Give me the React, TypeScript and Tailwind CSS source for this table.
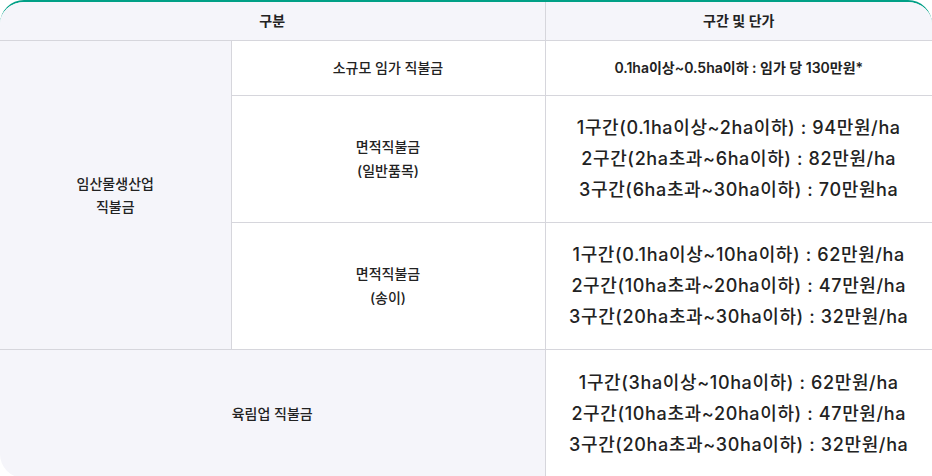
const BIG_ROWS = [
  [
    "1구간(0.1ha이상~2ha이하) : 94만원/ha",
    "2구간(2ha초과~6ha이하) : 82만원/ha",
    "3구간(6ha초과~30ha이하) : 70만원ha",
  ],
  [
    "1구간(0.1ha이상~10ha이하) : 62만원/ha",
    "2구간(10ha초과~20ha이하) : 47만원/ha",
    "3구간(20ha초과~30ha이하) : 32만원/ha",
  ],
  [
    "1구간(3ha이상~10ha이하) : 62만원/ha",
    "2구간(10ha초과~20ha이하) : 47만원/ha",
    "3구간(20ha초과~30ha이하) : 32만원/ha",
  ],
];

function Lines({ lines }: { lines: string[] }) {
  return (
    <div className="text-[18px] leading-[31px] text-[#222] font-medium tracking-[0.035em]">
      {lines.map((l) => (
        <p key={l}>{l}</p>
      ))}
    </div>
  );
}

export default function App() {
  return (
    <div
      className="w-[932px] h-[476px] overflow-hidden bg-white"
      style={{ fontFamily: '"Inter", "Noto Sans CJK KR", sans-serif' }}
    >
      <div className="h-[478px] overflow-hidden rounded-[24px] border-t-2 border-[#00a086]">
        <table className="w-full border-collapse text-center text-[14px] text-[#222]">
          <colgroup>
            <col className="w-[231px]" />
            <col className="w-[314px]" />
            <col />
          </colgroup>
          <thead>
            <tr className="h-[38px] bg-[#f5f5fa]">
              <th colSpan={2} className="border-b border-r border-[#d6d6dc] font-semibold">
                구분
              </th>
              <th className="border-b border-[#d6d6dc] font-semibold">구간 및 단가</th>
            </tr>
          </thead>
          <tbody>
            <tr className="h-[55px]">
              <td
                rowSpan={3}
                className="border-b border-r border-[#d6d6dc] bg-[#f5f5fa] font-medium leading-[23px]"
              >
                임산물생산업
                <br />
                직불금
              </td>
              <td className="border-b border-r border-[#d6d6dc] font-medium">소규모 임가 직불금</td>
              <td className="border-b border-[#d6d6dc] font-semibold">
                0.1ha이상~0.5ha이하 : 임가 당 130만원*
              </td>
            </tr>
            <tr className="h-[127px]">
              <td className="border-b border-r border-[#d6d6dc] font-medium leading-[24px]">
                면적직불금
                <br />
                (일반품목)
              </td>
              <td className="border-b border-[#d6d6dc]">
                <Lines lines={BIG_ROWS[0]} />
              </td>
            </tr>
            <tr className="h-[127px]">
              <td className="border-b border-r border-[#d6d6dc] font-medium leading-[24px]">
                면적직불금
                <br />
                (송이)
              </td>
              <td className="border-b border-[#d6d6dc]">
                <Lines lines={BIG_ROWS[1]} />
              </td>
            </tr>
            <tr className="h-[128px]">
              <td colSpan={2} className="border-r border-[#d6d6dc] bg-[#f5f5fa] font-medium">
                육림업 직불금
              </td>
              <td>
                <Lines lines={BIG_ROWS[2]} />
              </td>
            </tr>
          </tbody>
        </table>
      </div>
    </div>
  );
}
